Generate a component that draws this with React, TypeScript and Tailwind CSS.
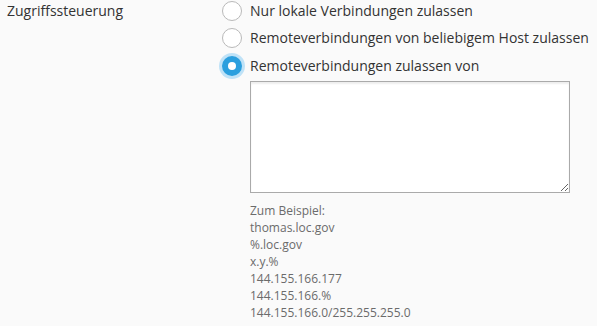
import { useState } from "react";

const options = [
  { id: "local", label: "Nur lokale Verbindungen zulassen" },
  { id: "any", label: "Remoteverbindungen von beliebigem Host zulassen" },
  { id: "from", label: "Remoteverbindungen zulassen von" },
];

const examples = [
  "Zum Beispiel:",
  "thomas.loc.gov",
  "%.loc.gov",
  "x.y.%",
  "144.155.166.177",
  "144.155.166.%",
  "144.155.166.0/255.255.255.0",
];

function Radio({ checked }: { checked: boolean }) {
  if (checked) {
    return (
      <span className="flex h-[20px] w-[20px] shrink-0 items-center justify-center rounded-full bg-[#2b9fde] ring-[3px] ring-[#bfe2f7]">
        <span className="h-[8px] w-[8px] rounded-full bg-white" />
      </span>
    );
  }
  return (
    <span className="h-[20px] w-[20px] shrink-0 rounded-full border border-[#b9b9b9] bg-white" />
  );
}

export default function App() {
  const [mode, setMode] = useState("from");

  return (
    <div
      className="flex h-[326px] w-[597px] bg-[#fafafa] text-[14px] text-[#333]"
      style={{ fontFamily: '"Open Sans", "Noto Sans", sans-serif' }}
    >
      {/* Label column */}
      <div className="w-[222px] shrink-0 pl-[7px] leading-[22px]">Zugriffssteuerung</div>

      {/* Options */}
      <div className="flex flex-col">
        {options.map((o, i) => (
          <label
            key={o.id}
            onClick={() => setMode(o.id)}
            className={`flex h-[22px] cursor-pointer items-center gap-[8px] ${
              i === 0 ? "" : i === 1 ? "mt-[5px]" : "mt-[6px]"
            }`}
          >
            <Radio checked={mode === o.id} />
            <span className="leading-[22px]">{o.label}</span>
          </label>
        ))}

        <div className="ml-[28px] mt-[4px] flex flex-col">
          <textarea className="block h-[112px] w-[320px] resize border border-[#aaa] bg-white shadow-[inset_0_2px_2px_rgba(0,0,0,0.07)] outline-none" />
          <div className="mt-[9px] text-[12px] leading-[17px] text-[#6b6b6b]">
            {examples.map((e) => (
              <div key={e}>{e}</div>
            ))}
          </div>
        </div>
      </div>
    </div>
  );
}
